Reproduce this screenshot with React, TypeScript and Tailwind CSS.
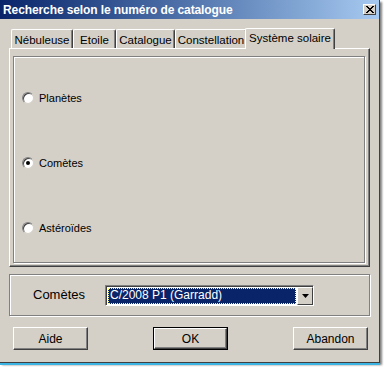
const tabs = [
    {t: "Nébuleuse", w: "w-[62px]"},
    {t: "Etoile", w: "w-[43px]"},
    {t: "Catalogue", w: "w-[59px]"},
    {t: "Constellation", w: "w-[72px]"},
];

const Radio = ({label, checked}: {label: string; checked?: boolean}) => (
    <div className="flex items-center h-[14px]">
        <span className="relative w-[12px] h-[12px] rounded-full bg-white border border-t-[#808080] border-l-[#808080] border-r-[#d4d0c8] border-b-[#d4d0c8] shadow-[inset_1px_1px_0_#404040]">
            {checked && <span className="absolute left-[3px] top-[3px] w-[4px] h-[4px] rounded-full bg-black" />}
        </span>
        <span className="ml-[5px]">{label}</span>
    </div>
);

const Button = ({label, def}: {label: string; def?: boolean}) => (
    <div
        className={[
            "w-[75px] h-[23px] flex items-center justify-center text-[12px]",
            def ? "border border-black" : "",
        ].join(" ")}
    >
        <div className="w-full h-full flex items-center justify-center border border-t-white border-l-white border-r-[#404040] border-b-[#404040] shadow-[inset_-1px_-1px_0_#808080]">
            {label}
        </div>
    </div>
);

export default function App() {
    return (
        <div className="w-[384px] h-[369px] bg-white overflow-hidden" style={{fontFamily: '"Liberation Sans", Arial, sans-serif'}}>
            <div className="w-[380px] h-[363px] bg-[#d4d0c8] border-r border-b border-[#404040] shadow-[2px_2px_2px_#808080] text-black text-[11px] flex flex-col">
                <div className="h-[19px] flex items-center justify-between pl-[3px] pr-[3px] bg-linear-to-r from-[#0a246a] to-[#a6caf0]">
                    <span className="text-white font-bold text-[12px] leading-none tracking-[-0.1px]">Recherche selon le numéro de catalogue</span>
                    <span className="w-[13px] h-[11px] bg-[#d4d0c8] border border-t-white border-l-white border-r-[#404040] border-b-[#404040] flex items-center justify-center">
                        <svg width="8" height="7" viewBox="0 0 8 7">
                            <path d="M0 0L7 7M1 0L8 7M7 0L0 7M8 0L1 7" stroke="black" strokeWidth="1" />
                        </svg>
                    </span>
                </div>
                <div className="px-[9px] pt-[8px] flex flex-col">
                    <div className="flex items-end h-[21px] pl-[2px] relative z-10 text-[11.5px]">
                        {tabs.map((t) => (
                            <div key={t.t} className={`${t.w} h-[19px] pt-[2px] text-center border-t border-l border-r border-t-white border-l-white border-r-[#404040] rounded-t-[2px] shadow-[inset_-1px_0_0_#808080]`}>
                                {t.t}
                            </div>
                        ))}
                        <div className="w-[90px] h-[21px] pt-[1px] text-center -ml-[2px] -mb-[1px] bg-[#d4d0c8] border-t border-l border-r border-t-white border-l-white border-r-[#404040] rounded-t-[2px] shadow-[inset_-1px_0_0_#808080]">
                            Système solaire
                        </div>
                    </div>
                    <div className="h-[219px] border border-t-white border-l-white border-r-[#404040] border-b-[#404040] shadow-[inset_-1px_-1px_0_#808080] pt-[7px] pl-[3px] pr-[4px] pb-[3px]">
                        <div className="h-full border border-[#808080] shadow-[1px_1px_0_white,inset_1px_1px_0_white] flex flex-col pl-[8px] pt-[34px] gap-[51px]">
                            <Radio label="Planètes" />
                            <Radio label="Comètes" checked />
                            <Radio label="Astéroïdes" />
                        </div>
                    </div>
                    <div className="mt-[7px] h-[42px] border border-[#808080] shadow-[1px_1px_0_white,inset_1px_1px_0_white] flex items-center pl-[23px]">
                        <span className="text-[13px] w-[72px]">Comètes</span>
                        <div className="w-[209px] h-[21px] bg-white border border-t-[#808080] border-l-[#808080] border-r-white border-b-white flex">
                            <div className="flex-1 flex border-t border-l border-[#404040]">
                                <div className="flex-1 m-[1px] bg-[#0a246a] outline-1 outline-dotted outline-[#ffff80] -outline-offset-1 text-white text-[12px] leading-[15px] pl-[2px]">
                                    C/2008 P1 (Garradd)
                                </div>
                                <div className="w-[16px] bg-[#d4d0c8] border border-t-white border-l-white border-r-[#404040] border-b-[#404040] flex items-center justify-center">
                                    <svg width="7" height="4" viewBox="0 0 7 4">
                                        <path d="M0 0H7L3.5 4Z" fill="black" />
                                    </svg>
                                </div>
                            </div>
                        </div>
                    </div>
                    <div className="mt-[11px] flex justify-between px-[4px] pr-[2px]">
                        <Button label="Aide" />
                        <Button label="OK" def />
                        <Button label="Abandon" />
                    </div>
                </div>
            </div>
            <div className="w-[380px] h-[2px] bg-[#3bb4e4]" />
        </div>
    );
}
